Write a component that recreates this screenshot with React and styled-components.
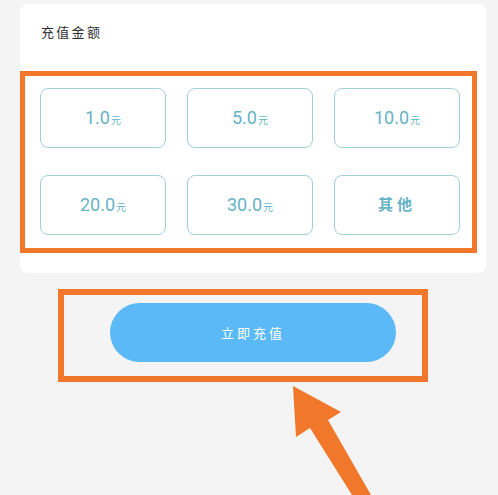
import React from "react";
import styled, { createGlobalStyle } from "styled-components";

const Global = createGlobalStyle`
  html, body { margin: 0; padding: 0; background: #f4f4f4; }
  body { font-family: "Noto Sans CJK SC", "Noto Sans", sans-serif; }
`;

const Page = styled.div`
  position: relative;
  width: 498px;
  height: 495px;
  overflow: hidden;
  padding: 4px 0 0 20px;
  box-sizing: border-box;
`;

const Card = styled.div`
  width: 466px;
  height: 269px;
  background: #ffffff;
  border-radius: 8px;
  padding-top: 19px;
  box-sizing: border-box;
`;

const Title = styled.div`
  padding-left: 21px;
  font-size: 13px;
  line-height: 18px;
  letter-spacing: 2.3px;
  color: #2e2e2e;
`;

const Frame = styled.div`
  border: 5px solid #f1782b;
  box-sizing: border-box;
`;

const AmountFrame = styled(Frame)`
  width: 457px;
  margin-top: 30px;
  padding: 12px 14px 13px 15px;
`;

const Grid = styled.div`
  display: grid;
  grid-template-columns: repeat(3, 126px);
  grid-auto-rows: 60px;
  column-gap: 21px;
  row-gap: 27px;
`;

const Amount = styled.button`
  display: flex;
  align-items: baseline;
  justify-content: center;
  padding: 0;
  padding-top: 18px;
  box-sizing: border-box;
  background: #fff;
  border: 1.5px solid #a3cfd6;
  border-radius: 8px;
  color: #66b3c6;
  font-family: Roboto, "Noto Sans CJK SC", sans-serif;
  font-size: ${(p) => (p.$text ? "15px" : "18px")};
  font-weight: ${(p) => (p.$text ? 700 : 400)};
  letter-spacing: ${(p) => (p.$text ? "4px" : "0")};
  line-height: 22px;
`;

const Unit = styled.span`
  font-size: 10px;
  font-family: "Noto Sans CJK SC", sans-serif;
  margin-left: 1px;
`;

const ActionFrame = styled(Frame)`
  width: 370px;
  height: 93px;
  border-width: 6px;
  margin: 16px 0 0 38px;
  padding: 8px 0 0 46px;
`;

const Submit = styled.button`
  width: 286px;
  height: 59px;
  border: none;
  border-radius: 30px;
  background: #5ab9f6;
  color: #fff;
  font-family: "Noto Sans CJK SC", sans-serif;
  font-size: 13px;
  letter-spacing: 3px;
  padding: 0;
`;

const Arrow = styled.svg`
  position: absolute;
  left: 0;
  top: 0;
  pointer-events: none;
`;

const amounts = [
  { v: "1.0" },
  { v: "5.0" },
  { v: "10.0" },
  { v: "20.0" },
  { v: "30.0" },
];

export default function App() {
  return (
    <>
      <Global />
      <Page>
        <Card>
          <Title>充值金额</Title>
          <AmountFrame>
            <Grid>
              {amounts.map((a) => (
                <Amount key={a.v}>
                  {a.v}
                  <Unit>元</Unit>
                </Amount>
              ))}
              <Amount $text>其他</Amount>
            </Grid>
          </AmountFrame>
        </Card>
        <ActionFrame>
          <Submit>立即充值</Submit>
        </ActionFrame>
        <Arrow width="498" height="495" viewBox="0 0 498 495">
          <polygon
            points="293,386 341,412 328,420 371,495 352,495 310,428 296,437"
            fill="#f1782b"
          />
        </Arrow>
      </Page>
    </>
  );
}
